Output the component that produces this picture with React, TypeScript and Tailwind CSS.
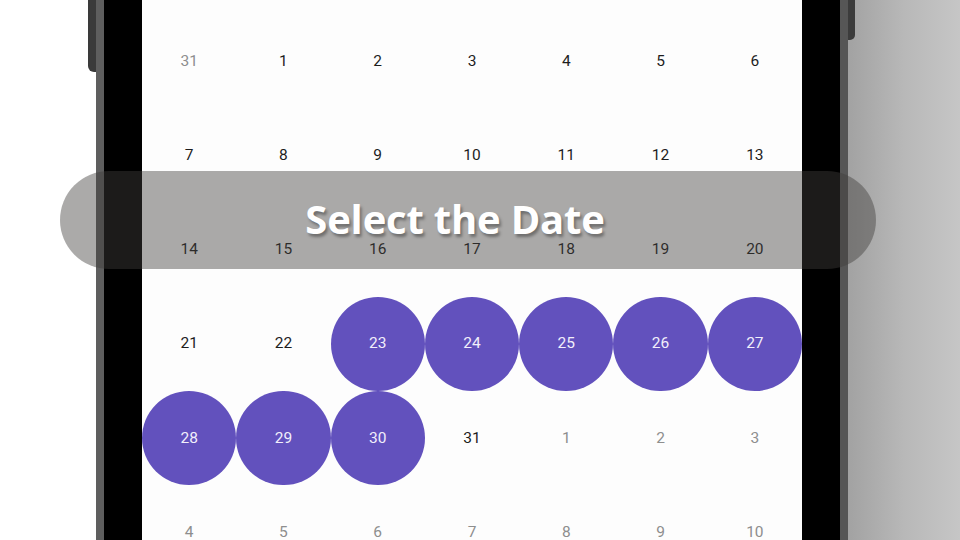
import React from 'react'

type Day = { n: number; muted?: boolean; picked?: boolean }

const rows: Day[][] = [
  [{ n: 31, muted: true }, { n: 1 }, { n: 2 }, { n: 3 }, { n: 4 }, { n: 5 }, { n: 6 }],
  [{ n: 7 }, { n: 8 }, { n: 9 }, { n: 10 }, { n: 11 }, { n: 12 }, { n: 13 }],
  [{ n: 14 }, { n: 15 }, { n: 16 }, { n: 17 }, { n: 18 }, { n: 19 }, { n: 20 }],
  [
    { n: 21 },
    { n: 22 },
    { n: 23, picked: true },
    { n: 24, picked: true },
    { n: 25, picked: true },
    { n: 26, picked: true },
    { n: 27, picked: true },
  ],
  [
    { n: 28, picked: true },
    { n: 29, picked: true },
    { n: 30, picked: true },
    { n: 31 },
    { n: 1, muted: true },
    { n: 2, muted: true },
    { n: 3, muted: true },
  ],
  [
    { n: 4, muted: true },
    { n: 5, muted: true },
    { n: 6, muted: true },
    { n: 7, muted: true },
    { n: 8, muted: true },
    { n: 9, muted: true },
    { n: 10, muted: true },
  ],
]

function DayCell({ day }: { day: Day }) {
  if (day.picked) {
    return (
      <div className="flex h-[94.28px] items-center justify-center">
        <div className="flex h-full w-full items-center justify-center rounded-full bg-[#6251bd] text-[#f1effb]">
          {day.n}
        </div>
      </div>
    )
  }
  return (
    <div
      className={`flex h-[94.28px] items-center justify-center ${
        day.muted ? 'text-[#8e8e8e]' : 'text-[#1d1d1d]'
      }`}
    >
      {day.n}
    </div>
  )
}

export default function App() {
  return (
    <div className="relative h-[540px] w-[960px] overflow-hidden bg-white">
      <div className="flex h-full">
        {/* left side */}
        <div className="w-[88px] bg-white" />
        <div className="w-[8px]">
          <div className="h-[72px] rounded-bl-[6px] bg-[#3a3a3a]" />
        </div>

        {/* phone frame */}
        <div className="w-[8px] bg-[#5e5e5e]" />
        <div className="w-[38px] bg-black" />

        {/* screen */}
        <div className="w-[660px] bg-[#fdfdfd] pt-[14px] font-['Roboto',sans-serif] text-[15.5px]">
          <div className="grid grid-cols-7">
            {rows.map((row, i) =>
              row.map((day, j) => <DayCell key={`${i}-${j}`} day={day} />)
            )}
          </div>
        </div>

        <div className="w-[38px] bg-black" />
        <div className="w-[8px] bg-[#565656]" />

        {/* right side */}
        <div className="flex-1 bg-gradient-to-r from-[#a2a2a2] via-[#b8b8b8] to-[#c6c6c6]">
          <div className="h-[40px] w-[7px] rounded-br-[5px] bg-[#3c3c3c]" />
        </div>
      </div>

      {/* caption overlay */}
      <div className="absolute left-[60px] top-[171px] flex h-[98px] w-[816px] items-center justify-center rounded-full bg-[rgba(63,61,59,0.44)]">
        <span className="-mt-[2px] -ml-[26px] font-['Open_Sans',sans-serif] text-[40px] font-bold tracking-[-0.2px] text-white [text-shadow:2px_3px_3px_rgba(0,0,0,0.35)]">
          Select the Date
        </span>
      </div>
    </div>
  )
}
